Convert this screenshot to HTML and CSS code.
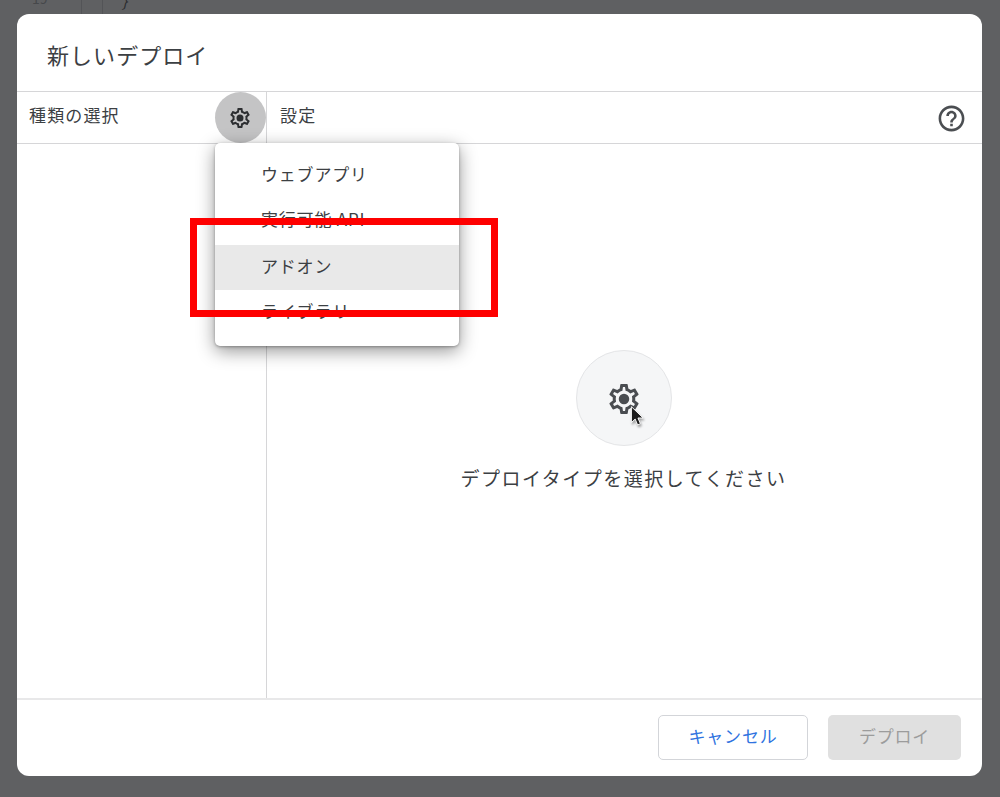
FILE: index.html
```html
<!DOCTYPE html>
<html lang="ja">
<head>
<meta charset="utf-8">
<title>新しいデプロイ</title>
<link rel="stylesheet" href="styles.css">
</head>
<body>
<div class="editor">
  <span class="line-no">19</span>
  <span class="gutter-a"></span>
  <span class="gutter-b"></span>
  <span class="code">}</span>
</div>
<div class="dialog">
  <header class="title-bar"><h1 class="title">新しいデプロイ</h1></header>
  <div class="columns-head">
    <div class="side-head">
      <span class="head-label">種類の選択</span>
      <button class="gear-btn">
        <svg class="gear" viewBox="0 0 24 24"><path fill="currentColor" d="M19.43 12.98c.04-.32.07-.64.07-.98 0-.34-.03-.66-.07-.98l2.11-1.65c.19-.15.24-.42.12-.64l-2-3.46c-.09-.16-.26-.25-.44-.25-.06 0-.12.01-.17.03l-2.49 1c-.52-.4-1.08-.73-1.69-.98l-.38-2.65C14.46 2.18 14.25 2 14 2h-4c-.25 0-.46.18-.49.42l-.38 2.65c-.61.25-1.17.59-1.69.98l-2.49-1c-.06-.02-.12-.03-.18-.03-.17 0-.34.09-.43.25l-2 3.46c-.13.22-.07.49.12.64l2.11 1.65c-.04.32-.07.65-.07.98 0 .33.03.66.07.98l-2.11 1.65c-.19.15-.24.42-.12.64l2 3.46c.09.16.26.25.44.25.06 0 .12-.01.17-.03l2.49-1c.52.4 1.08.73 1.69.98l.38 2.65c.03.24.24.42.49.42h4c.25 0 .46-.18.49-.42l.38-2.65c.61-.25 1.17-.59 1.69-.98l2.49 1c.06.02.12.03.18.03.17 0 .34-.09.43-.25l2-3.46c.12-.22.07-.49-.12-.64l-2.11-1.65zm-1.98-1.71c.04.31.05.52.05.73 0 .21-.02.43-.05.73l-.14 1.13.89.7 1.08.84-.7 1.21-1.27-.51-1.04-.42-.9.68c-.43.32-.84.56-1.25.73l-1.06.43-.16 1.13-.2 1.35h-1.4l-.19-1.35-.16-1.13-1.06-.43c-.43-.18-.83-.41-1.23-.71l-.91-.7-1.06.43-1.27.51-.7-1.21 1.08-.84.89-.7-.14-1.13c-.03-.31-.05-.54-.05-.74s.02-.43.05-.73l.14-1.13-.89-.7-1.08-.84.7-1.21 1.27.51 1.04.42.9-.68c.43-.32.84-.56 1.25-.73l1.06-.43.16-1.13.2-1.35h1.39l.19 1.35.16 1.13 1.06.43c.43.18.83.41 1.23.71l.91.7 1.06-.43 1.27-.51.7 1.21-1.07.85-.89.7.14 1.13zM12 8.5a3.5 3.5 0 1 0 0 7 3.5 3.5 0 0 0 0-7z"/></svg>
      </button>
    </div>
    <div class="main-head">
      <span class="head-label">設定</span>
      <svg class="help" viewBox="0 0 24 24"><path fill="currentColor" d="M11 18h2v-2h-2v2zm1-16C6.48 2 2 6.48 2 12s4.48 10 10 10 10-4.48 10-10S17.52 2 12 2zm0 18c-4.41 0-8-3.59-8-8s3.59-8 8-8 8 3.59 8 8-3.59 8-8 8zm0-14c-2.21 0-4 1.79-4 4h2c0-1.1.9-2 2-2s2 .9 2 2c0 2-3 1.75-3 5h2c0-2.25 3-2.5 3-5 0-2.21-1.79-4-4-4z"/></svg>
    </div>
  </div>
  <div class="columns-body">
    <aside class="side-body"></aside>
    <main class="main-body">
      <div class="empty-circle">
        <svg class="gear-large" viewBox="0 0 24 24"><path fill="currentColor" d="M19.43 12.98c.04-.32.07-.64.07-.98 0-.34-.03-.66-.07-.98l2.11-1.65c.19-.15.24-.42.12-.64l-2-3.46c-.09-.16-.26-.25-.44-.25-.06 0-.12.01-.17.03l-2.49 1c-.52-.4-1.08-.73-1.69-.98l-.38-2.65C14.46 2.18 14.25 2 14 2h-4c-.25 0-.46.18-.49.42l-.38 2.65c-.61.25-1.17.59-1.69.98l-2.49-1c-.06-.02-.12-.03-.18-.03-.17 0-.34.09-.43.25l-2 3.46c-.13.22-.07.49.12.64l2.11 1.65c-.04.32-.07.65-.07.98 0 .33.03.66.07.98l-2.11 1.65c-.19.15-.24.42-.12.64l2 3.46c.09.16.26.25.44.25.06 0 .12-.01.17-.03l2.49-1c.52.4 1.08.73 1.69.98l.38 2.65c.03.24.24.42.49.42h4c.25 0 .46-.18.49-.42l.38-2.65c.61-.25 1.17-.59 1.69-.98l2.49 1c.06.02.12.03.18.03.17 0 .34-.09.43-.25l2-3.46c.12-.22.07-.49-.12-.64l-2.11-1.65zm-1.98-1.71c.04.31.05.52.05.73 0 .21-.02.43-.05.73l-.14 1.13.89.7 1.08.84-.7 1.21-1.27-.51-1.04-.42-.9.68c-.43.32-.84.56-1.25.73l-1.06.43-.16 1.13-.2 1.35h-1.4l-.19-1.35-.16-1.13-1.06-.43c-.43-.18-.83-.41-1.23-.71l-.91-.7-1.06.43-1.27.51-.7-1.21 1.08-.84.89-.7-.14-1.13c-.03-.31-.05-.54-.05-.74s.02-.43.05-.73l.14-1.13-.89-.7-1.08-.84.7-1.21 1.27.51 1.04.42.9-.68c.43-.32.84-.56 1.25-.73l1.06-.43.16-1.13.2-1.35h1.39l.19 1.35.16 1.13 1.06.43c.43.18.83.41 1.23.71l.91.7 1.06-.43 1.27-.51.7 1.21-1.07.85-.89.7.14 1.13zM12 8.5a3.5 3.5 0 1 0 0 7 3.5 3.5 0 0 0 0-7z"/></svg>
        <svg class="cursor" viewBox="0 0 16 24"><path fill="#1b1b1b" stroke="#fff" stroke-width="1" d="M1.5 1.5v17l4-3.8 2.6 6.3 3-1.3-2.6-6.1h5.5z"/></svg>
      </div>
      <p class="empty-text">デプロイタイプを選択してください</p>
    </main>
  </div>
  <footer class="footer">
    <button class="btn btn-cancel">キャンセル</button>
    <button class="btn btn-deploy">デプロイ</button>
  </footer>
  <ul class="menu">
    <li class="menu-item">ウェブアプリ</li>
    <li class="menu-item">実行可能 API</li>
    <li class="menu-item active">アドオン</li>
    <li class="menu-item">ライブラリ</li>
  </ul>
</div>
<div class="highlight"></div>
</body>
</html>
```
FILE: styles.css
```css
* { box-sizing: border-box; }
html, body { margin: 0; height: 100%; }
body {
  width: 1000px;
  height: 797px;
  overflow: hidden;
  background: #5f6062;
  font-family: "Noto Sans CJK JP", "Noto Sans", sans-serif;
  color: #3c4043;
  position: relative;
}
.editor { height: 14px; overflow: hidden; position: relative; }
.line-no { position: absolute; left: 32px; top: -12px; font-size: 14px; color: #46484b; }
.gutter-a { position: absolute; left: 81px; top: 0; width: 1px; height: 14px; background: #535457; }
.gutter-b { position: absolute; left: 102px; top: 0; width: 1px; height: 14px; background: #535457; }
.code { position: absolute; left: 122px; top: -12px; font-size: 16px; font-style: italic; color: #2b2c2e; }
.dialog {
  position: absolute;
  left: 17px;
  top: 14px;
  width: 965px;
  height: 762px;
  background: #fff;
  border-radius: 12px;
  display: flex;
  flex-direction: column;
}
.title-bar {
  height: 78px;
  padding: 2px 0 0 30px;
  display: flex;
  align-items: center;
  border-bottom: 1px solid #d6d6d8;
  flex: none;
}
.title { margin: 0; font-size: 22px; font-weight: 400; line-height: 28px; letter-spacing: 1.05px; color: #3c4043; }
.columns-head {
  display: flex;
  height: 52px;
  flex: none;
  border-bottom: 1px solid #d6d6d8;
}
.side-head {
  width: 250px;
  flex: none;
  padding-left: 12px;
  display: flex;
  align-items: center;
  justify-content: space-between;
  border-right: 1px solid #d6d6d8;
}
.head-label { font-size: 17px; line-height: 24px; letter-spacing: 1.15px; color: #3c4043; margin-bottom: 5px; }
.gear-btn {
  width: 51px;
  height: 51px;
  border: 0;
  padding: 0 2px 0 0;
  border-radius: 50%;
  background: #c4c4c5;
  color: #2c2e31;
  display: flex;
  align-items: center;
  justify-content: center;
}
.gear { width: 24px; height: 24px; }
.main-head {
  flex: 1;
  padding: 0 15px 0 13px;
  display: flex;
  align-items: center;
  justify-content: space-between;
}
.help { width: 31px; height: 31px; color: #4b4e52; margin-top: 1px; }
.columns-body { flex: 1; display: flex; min-height: 0; }
.side-body { width: 250px; flex: none; border-right: 1px solid #d6d6d8; }
.main-body { flex: 1; display: flex; flex-direction: column; align-items: center; padding: 206px 2px 0 0; }
.empty-circle {
  width: 96px;
  height: 96px;
  border-radius: 50%;
  background: #f5f6f7;
  border: 1px solid #e4e5e7;
  display: flex;
  align-items: center;
  justify-content: center;
  position: relative;
  color: #4a4d51;
  padding-top: 2px;
}
.gear-large { width: 36px; height: 36px; }
.cursor {
  position: absolute;
  left: 53px;
  top: 54px;
  width: 15px;
  height: 23px;
  filter: drop-shadow(1px 2px 1px rgba(0,0,0,.35));
}
.empty-text { margin: 18px 0 0; font-size: 19px; line-height: 28px; letter-spacing: 1.5px; color: #3c4043; }
.footer {
  height: 78px;
  flex: none;
  border-top: 2px solid #e8e8e9;
  padding: 15px 21px 0 0;
  display: flex;
  justify-content: flex-end;
  align-items: flex-start;
  gap: 20px;
}
.btn {
  height: 45px;
  border-radius: 5px;
  font-family: inherit;
  font-size: 17px;
  letter-spacing: .8px;
  padding: 0 0 5px;
}
.btn-cancel { width: 150px; background: #fff; border: 1px solid #d3d5d9; color: #2f73e0; }
.btn-deploy { width: 133px; background: #e0e0e0; border: 0; color: #9c9c9c; }
.menu {
  position: absolute;
  left: 198px;
  top: 129px;
  width: 244px;
  height: 203px;
  margin: 0;
  padding: 8px 0 0;
  list-style: none;
  background: #fff;
  border-radius: 5px;
  box-shadow: 0 5px 18px rgba(0,0,0,.42), 0 1px 3px rgba(0,0,0,.3);
}
.menu-item {
  height: 46px;
  padding-left: 46px;
  font-size: 17px;
  line-height: 45px;
  letter-spacing: .8px;
  color: #3c4043;
}
.menu-item:nth-child(2) { line-height: 43px; }
.menu-item:last-child { line-height: 42px; }
.menu-item.active { background: #e9e9e9; height: 45px; margin-top: 2px; line-height: 42px; }
.highlight {
  position: absolute;
  left: 190px;
  top: 218px;
  width: 308px;
  height: 99px;
  border: 7px solid #fe0000;
}
```
